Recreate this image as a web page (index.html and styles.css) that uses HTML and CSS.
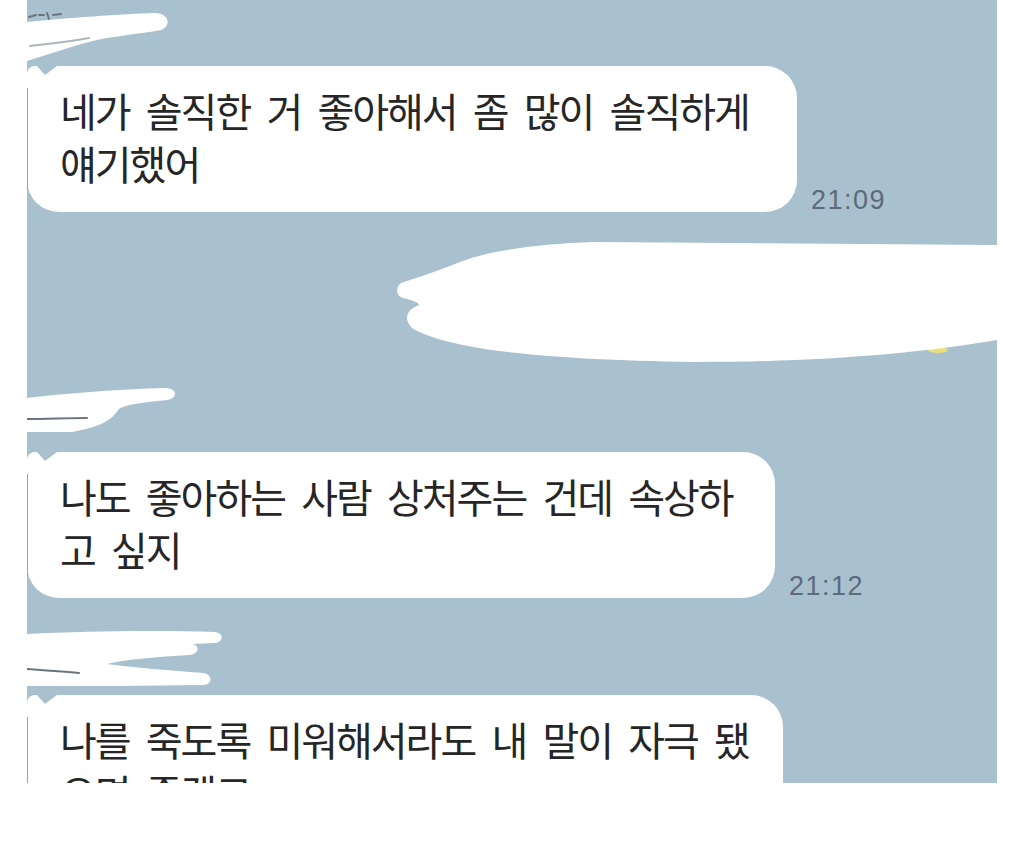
FILE: index.html
```html
<!DOCTYPE html>
<html lang="ko">
<head>
<meta charset="utf-8">
<title>채팅</title>
<link rel="stylesheet" href="styles.css">
</head>
<body>
<div class="chat">
  <svg class="scribble scribble-top" viewBox="0 0 970 66" width="970" height="66">
    <path class="ink" d="M2,17 l7,-2 M12,15 l5,0 M20,13 l2,6 M26,15 l8,-1" />
    <path class="ink faint" d="M0,38 C25,35 55,31 80,28" />
    <path class="white" d="M0,22 C40,18 95,14 128,13 C142,13 145,26 134,30 C112,34 88,36 70,40 C48,45 26,53 0,61 Z" />
    <path class="ink faint" d="M3,46 C20,44 40,42 62,38" />
  </svg>

  <div class="row">
    <div class="bubble b1">네가 솔직한 거 좋아해서 좀 많이 솔직하게<br>얘기했어</div>
    <span class="time">21:09</span>
  </div>

  <div class="blob-row">
    <svg class="blob" viewBox="0 0 602 120" width="602" height="120">
      <ellipse cx="543" cy="108" rx="10" ry="3" fill="#e9e27a" />
      <path class="white" d="M602,3 L200,0 C130,2 82,12 60,22 C45,28 22,36 9,40 C0,42 0,54 8,56 C16,58 24,60 24,63 C10,68 8,80 20,88 C60,108 150,118 300,120 C420,120 520,112 602,98 Z" />
    </svg>
  </div>

  <svg class="scribble scribble-mid" viewBox="0 0 970 90" width="970" height="90">
    <path class="white" d="M0,36 C40,31 100,27 138,26 C150,26 152,36 140,38 C120,40 100,42 92,47 C86,55 80,64 45,70 L0,70 Z" />
    <path class="ink" d="M0,57 C20,57 40,56 60,56" />
  </svg>

  <div class="row">
    <div class="bubble b3">나도 좋아하는 사람 상처주는 건데 속상하<br>고 싶지</div>
    <span class="time">21:12</span>
  </div>

  <svg class="scribble scribble-low" viewBox="0 0 970 97" width="970" height="97">
    <path class="white" d="M0,36 C60,33 130,32 188,34 C197,35 197,44 188,45 L165,46 C173,47 173,56 162,57 C130,59 100,61 80,66 C110,70 150,73 176,75 C186,76 186,87 176,87 C120,88 60,88 0,88 Z" />
    <path class="ink" d="M0,71 C15,72 35,73 52,75" />
  </svg>

  <div class="row">
    <div class="bubble b4">나를 죽도록 미워해서라도 내 말이 자극 됐<br>으면 좋겠고</div>
  </div>
</div>
</body>
</html>
```

FILE: styles.css
```css
body {
  margin: 0;
  background: #ffffff;
}

.chat {
  margin-left: 27px;
  width: 970px;
  height: 783px;
  overflow: hidden;
  background: #a9c0cf;
  display: flex;
  flex-direction: column;
  font-family: "Noto Sans CJK KR", "Noto Sans", sans-serif;
}

.scribble {
  display: block;
  flex: none;
}

.white {
  fill: #ffffff;
}

.ink {
  fill: none;
  stroke: #6c757e;
  stroke-width: 2;
  stroke-linecap: round;
}

.ink.faint {
  stroke: #8b96a0;
  opacity: 0.7;
}

.row {
  display: flex;
  align-items: flex-end;
  gap: 14px;
  flex: none;
}

.bubble {
  position: relative;
  box-sizing: border-box;
  background: #ffffff;
  border-radius: 8px 32px 32px 32px;
  padding: 18px 0 22px 33px;
  font-size: 40px;
  line-height: 53px;
  letter-spacing: -2px;
  word-spacing: 7px;
  color: #262626;
  white-space: nowrap;
}

.bubble::before {
  content: "";
  position: absolute;
  left: 10px;
  top: 0;
  width: 20px;
  height: 9px;
  background: #a9c0cf;
  clip-path: polygon(0 0, 100% 0, 40% 100%);
}

.bubble::after {
  content: "";
  position: absolute;
  left: 0;
  top: 22px;
  bottom: 22px;
  width: 1px;
  background: #9aa2a9;
}

.b1 {
  width: 770px;
}

.b3 {
  width: 748px;
}

.b4 {
  width: 756px;
}

.time {
  font-family: "Liberation Sans", Arial, sans-serif;
  font-size: 27px;
  line-height: 27px;
  letter-spacing: 1.5px;
  color: #5b6b79;
  margin-bottom: -2px;
}

.blob-row {
  display: flex;
  justify-content: flex-end;
  margin-top: 30px;
  flex: none;
}

.blob {
  display: block;
}
```
